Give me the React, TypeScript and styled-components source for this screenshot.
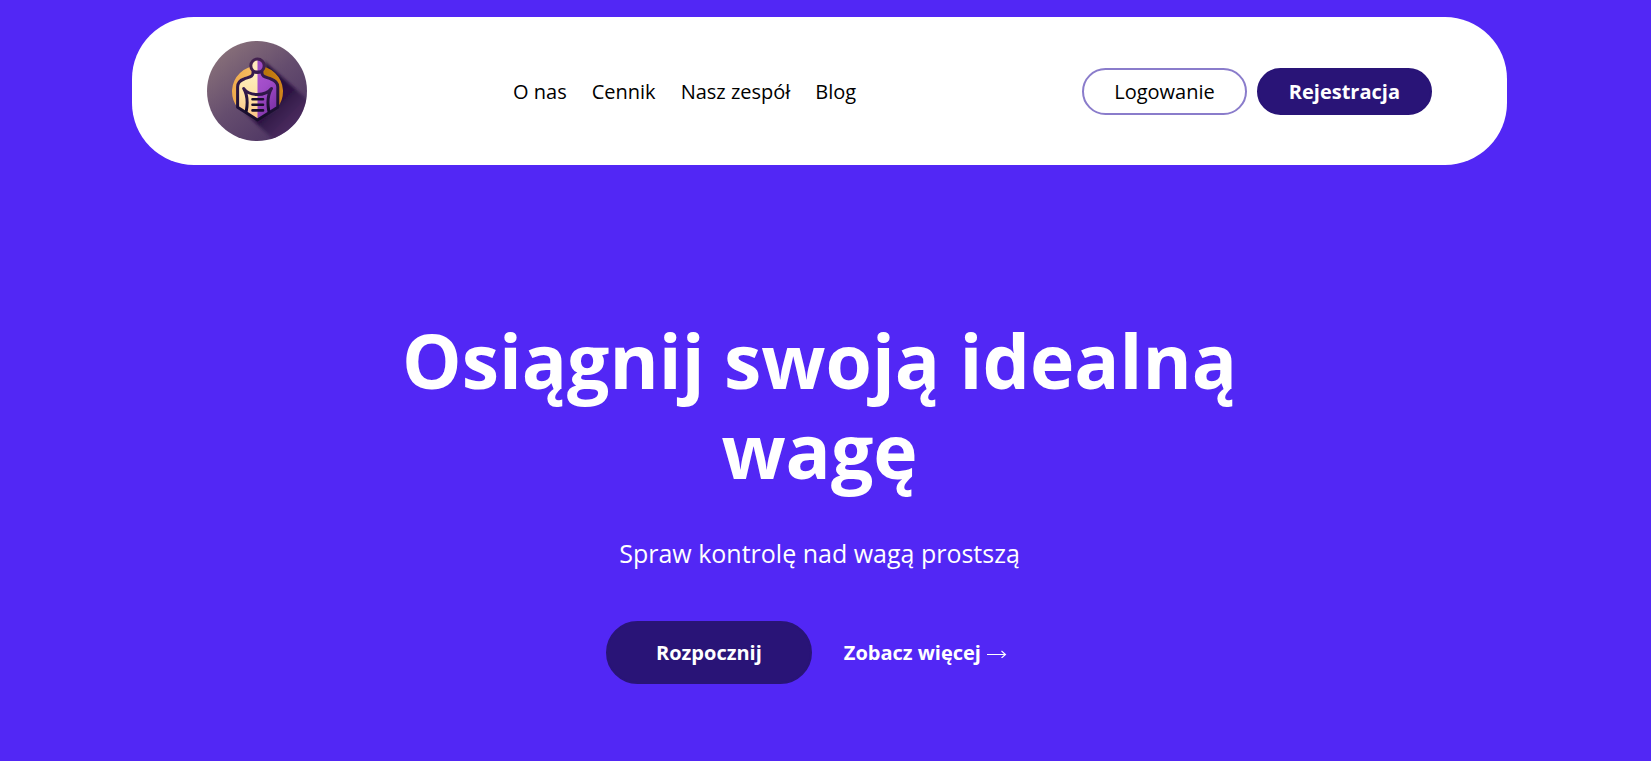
import React from "react";
import styled, { createGlobalStyle } from "styled-components";

const colors = {
  background: "#5227f5",
  dark: "#291477",
  outline: "#8a7ccb",
};

const GlobalStyle = createGlobalStyle`
  *, *::before, *::after { box-sizing: border-box; }
  body {
    margin: 0;
    background: ${colors.background};
    font-family: "Open Sans", "Noto Sans", sans-serif;
    font-size: 20px;
    line-height: 27px;
  }
`;

const Page = styled.div`
  min-height: 100vh;
  padding: 17px 144px 40px 132px;
`;

const Header = styled.header`
  display: flex;
  flex-wrap: wrap;
  align-items: center;
  justify-content: space-between;
  gap: 20px;
  padding: 24px 75px;
  border-radius: 62px;
  background: #fff;
`;

const LogoLink = styled.a`
  display: block;
  width: 100px;
  height: 100px;
`;

const NavList = styled.ul`
  display: flex;
  flex-wrap: wrap;
  gap: 25px;
  margin: 0;
  padding: 0 20px 0 0;
  list-style: none;
`;

const NavLink = styled.a`
  color: #000;
  text-decoration: none;
`;

const Actions = styled.div`
  display: flex;
  gap: 10px;
`;

const Button = styled.button<{ $variant?: "outline" | "solid"; $large?: boolean }>`
  padding: ${(p) => (p.$large ? "16px 48px" : "8px 30px")};
  border: 2px solid ${(p) => (p.$variant === "outline" ? colors.outline : colors.dark)};
  border-radius: ${(p) => (p.$large ? "32px" : "24px")};
  background: ${(p) => (p.$variant === "outline" ? "#fff" : colors.dark)};
  color: ${(p) => (p.$variant === "outline" ? "#000" : "#fff")};
  font: inherit;
  font-weight: ${(p) => (p.$variant === "outline" ? 400 : 700)};
  cursor: pointer;
`;

const Hero = styled.main`
  display: flex;
  flex-direction: column;
  align-items: center;
  padding-top: 150px;
  color: #fff;
  text-align: center;
`;

const Title = styled.h1`
  max-width: 900px;
  margin: 0;
  font-size: 75px;
  font-weight: 700;
  line-height: 90px;
`;

const Subtitle = styled.p`
  margin: 40px 0 50px;
  font-size: 25px;
  line-height: 36px;
`;

const HeroActions = styled.div`
  display: flex;
  flex-wrap: wrap;
  align-items: center;
  justify-content: center;
`;

const MoreLink = styled.a`
  display: flex;
  align-items: center;
  gap: 6px;
  padding: 18px 26px 18px 32px;
  color: #fff;
  font-weight: 700;
  text-decoration: none;
`;

const BODY =
  "M46 31 C46.5 36 42 36 37 38 C32.5 39.6 30.6 41.5 30.6 46 V66.3 L50.5 79 L70.8 66.3 V46 C70.8 41.5 68.5 39.6 64 38 C59 36 54.5 36 55 31 Z";

function Logo() {
  return (
    <svg width="100" height="100" viewBox="0 0 100 100" aria-hidden="true">
      <defs>
        <linearGradient id="disc" x1="0.15" y1="0.1" x2="0.8" y2="0.9">
          <stop offset="0" stopColor="#876f79" />
          <stop offset="0.5" stopColor="#654d6e" />
          <stop offset="1" stopColor="#4f3664" />
        </linearGradient>
        <linearGradient id="shade" gradientUnits="userSpaceOnUse" x1="50" y1="45" x2="90" y2="85">
          <stop offset="0" stopColor="#200c38" />
          <stop offset="0.5" stopColor="#2c1242" stopOpacity="0.95" />
          <stop offset="1" stopColor="#45265a" stopOpacity="0.5" />
        </linearGradient>
        <linearGradient id="ring" x1="0" y1="0" x2="1" y2="0">
          <stop offset="0" stopColor="#efaa4c" />
          <stop offset="0.4" stopColor="#f6bd62" />
          <stop offset="0.65" stopColor="#b97508" />
          <stop offset="1" stopColor="#d1841c" />
        </linearGradient>
        <linearGradient id="cream" x1="0.3" y1="0" x2="0.2" y2="1">
          <stop offset="0" stopColor="#fff0bf" />
          <stop offset="0.5" stopColor="#fde0a4" />
          <stop offset="1" stopColor="#f9c181" />
        </linearGradient>
        <linearGradient id="violet" x1="0" y1="0" x2="1" y2="1">
          <stop offset="0" stopColor="#b65bd5" />
          <stop offset="0.5" stopColor="#a04cc8" />
          <stop offset="1" stopColor="#6d2697" />
        </linearGradient>
        <linearGradient id="line" x1="0" y1="0" x2="0" y2="1">
          <stop offset="0" stopColor="#371b50" />
          <stop offset="1" stopColor="#150d2a" />
        </linearGradient>
        <clipPath id="round">
          <circle cx="50" cy="50" r="50" />
        </clipPath>
        <clipPath id="leftHalf">
          <rect width="50.5" height="100" />
        </clipPath>
        <filter id="soft" x="-20%" y="-20%" width="140%" height="140%">
          <feGaussianBlur stdDeviation="1.5" />
        </filter>
      </defs>
      <g clipPath="url(#round)">
        <rect width="100" height="100" fill="url(#disc)" />
        <path d="M57 20 L110 67 V140 L37 71 L50 79 L71 66 Z" fill="url(#shade)" filter="url(#soft)" />
      </g>
      <path d="M31 67 A25.5 25.5 0 1 1 70 67 Z" fill="url(#ring)" />
      <path d={BODY} fill="url(#violet)" />
      <path d={BODY} fill="url(#cream)" clipPath="url(#leftHalf)" />
      <circle cx="50.5" cy="24.8" r="6.5" fill="#9d4bc5" />
      <circle cx="50.5" cy="24.8" r="6.5" fill="#ffe9bc" clipPath="url(#leftHalf)" />
      <circle cx="50.5" cy="24.8" r="6.7" fill="none" stroke="#42204f" strokeWidth="3" />
      <g fill="none" stroke="url(#line)" strokeWidth="3" strokeLinecap="round" strokeLinejoin="round">
        <path d={BODY} />
        <path d="M39.3 70 C40.8 62 40.5 54 36.7 47.5 C39.5 51.5 43 53.5 50.5 53.5 C58 53.5 61.5 51.5 64.5 47.5 C60.6 54 60.3 62 61.8 70" />
      </g>
      <path
        d="M45.5 58.2 H56 M45.5 63.8 H56 M45.5 69.4 H56"
        stroke="#180e2c"
        strokeWidth="2.6"
        strokeLinecap="round"
      />
    </svg>
  );
}

function Arrow() {
  return (
    <svg width="20" height="10" viewBox="0 0 20 10" aria-hidden="true">
      <path d="M0 6.5 H18.5 M14.5 3 L18.5 6.5 L14.5 10" fill="none" stroke="#fff" strokeWidth="1.1" />
    </svg>
  );
}

const links = ["O nas", "Cennik", "Nasz zespół", "Blog"];

export default function App() {
  return (
    <>
      <GlobalStyle />
      <Page>
        <Header>
          <LogoLink href="#" aria-label="Strona główna">
            <Logo />
          </LogoLink>
          <nav>
            <NavList>
              {links.map((label) => (
                <li key={label}>
                  <NavLink href="#">{label}</NavLink>
                </li>
              ))}
            </NavList>
          </nav>
          <Actions>
            <Button type="button" $variant="outline">Logowanie</Button>
            <Button type="button">Rejestracja</Button>
          </Actions>
        </Header>
        <Hero>
          <Title>Osiągnij swoją idealną wagę</Title>
          <Subtitle>Spraw kontrolę nad wagą prostszą</Subtitle>
          <HeroActions>
            <Button type="button" $large>Rozpocznij</Button>
            <MoreLink href="#">
              Zobacz więcej
              <Arrow />
            </MoreLink>
          </HeroActions>
        </Hero>
      </Page>
    </>
  );
}
